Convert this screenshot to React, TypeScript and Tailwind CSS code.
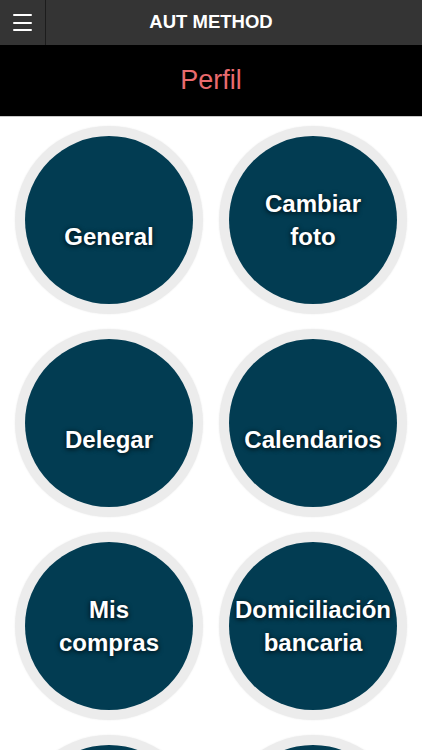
import React from "react";

const items: string[][] = [
  ["General"],
  ["Cambiar", "foto"],
  ["Delegar"],
  ["Calendarios"],
  ["Mis", "compras"],
  ["Domiciliación", "bancaria"],
  [],
  [],
];

export default function App() {
  return (
    <div
      className="w-[422px] h-[750px] overflow-hidden bg-white"
      style={{ fontFamily: '"Liberation Sans", Arial, sans-serif' }}
    >
      <div className="h-[45px] bg-[#343434] flex items-center relative">
        <div className="w-[46px] h-[45px] border-r border-[#1c1c1c] flex flex-col items-center justify-center gap-[5.5px] pr-[1px]">
          <div className="w-[19px] h-[2px] bg-white rounded-[1px]" />
          <div className="w-[19px] h-[2px] bg-white rounded-[1px]" />
          <div className="w-[19px] h-[2px] bg-white rounded-[1px]" />
        </div>
        <div className="absolute left-0 right-0 top-0 h-[45px] flex items-center justify-center pointer-events-none">
          <span className="text-white font-bold text-[18.5px] leading-none">AUT METHOD</span>
        </div>
      </div>
      <div className="h-[71px] bg-black flex items-center justify-center">
        <span className="text-[#ea6b6e] text-[27px] leading-none pb-[1px]">Perfil</span>
      </div>
      <div className="h-[1px] bg-[#c8c8c8]" />
      <div className="grid grid-cols-[188px_188px] gap-x-[16px] gap-y-[15px] px-[15px] pt-[9px]">
        {items.map((lines, i) => (
          <div
            key={i}
            className="w-[188px] h-[188px] rounded-full bg-[#ececec] flex items-center justify-center shadow-[0_0_2px_rgba(0,0,0,0.08)]"
          >
            <div className="w-[168px] h-[168px] rounded-full bg-[#023c52] flex flex-col items-center justify-end pb-[51px] overflow-visible">
              {lines.map((l, j) => (
                <span
                  key={j}
                  className="text-white font-bold text-[24px] leading-[33px] whitespace-nowrap [text-shadow:0_1px_5px_rgba(0,0,0,0.9)]"
                >
                  {l}
                </span>
              ))}
            </div>
          </div>
        ))}
      </div>
    </div>
  );
}
